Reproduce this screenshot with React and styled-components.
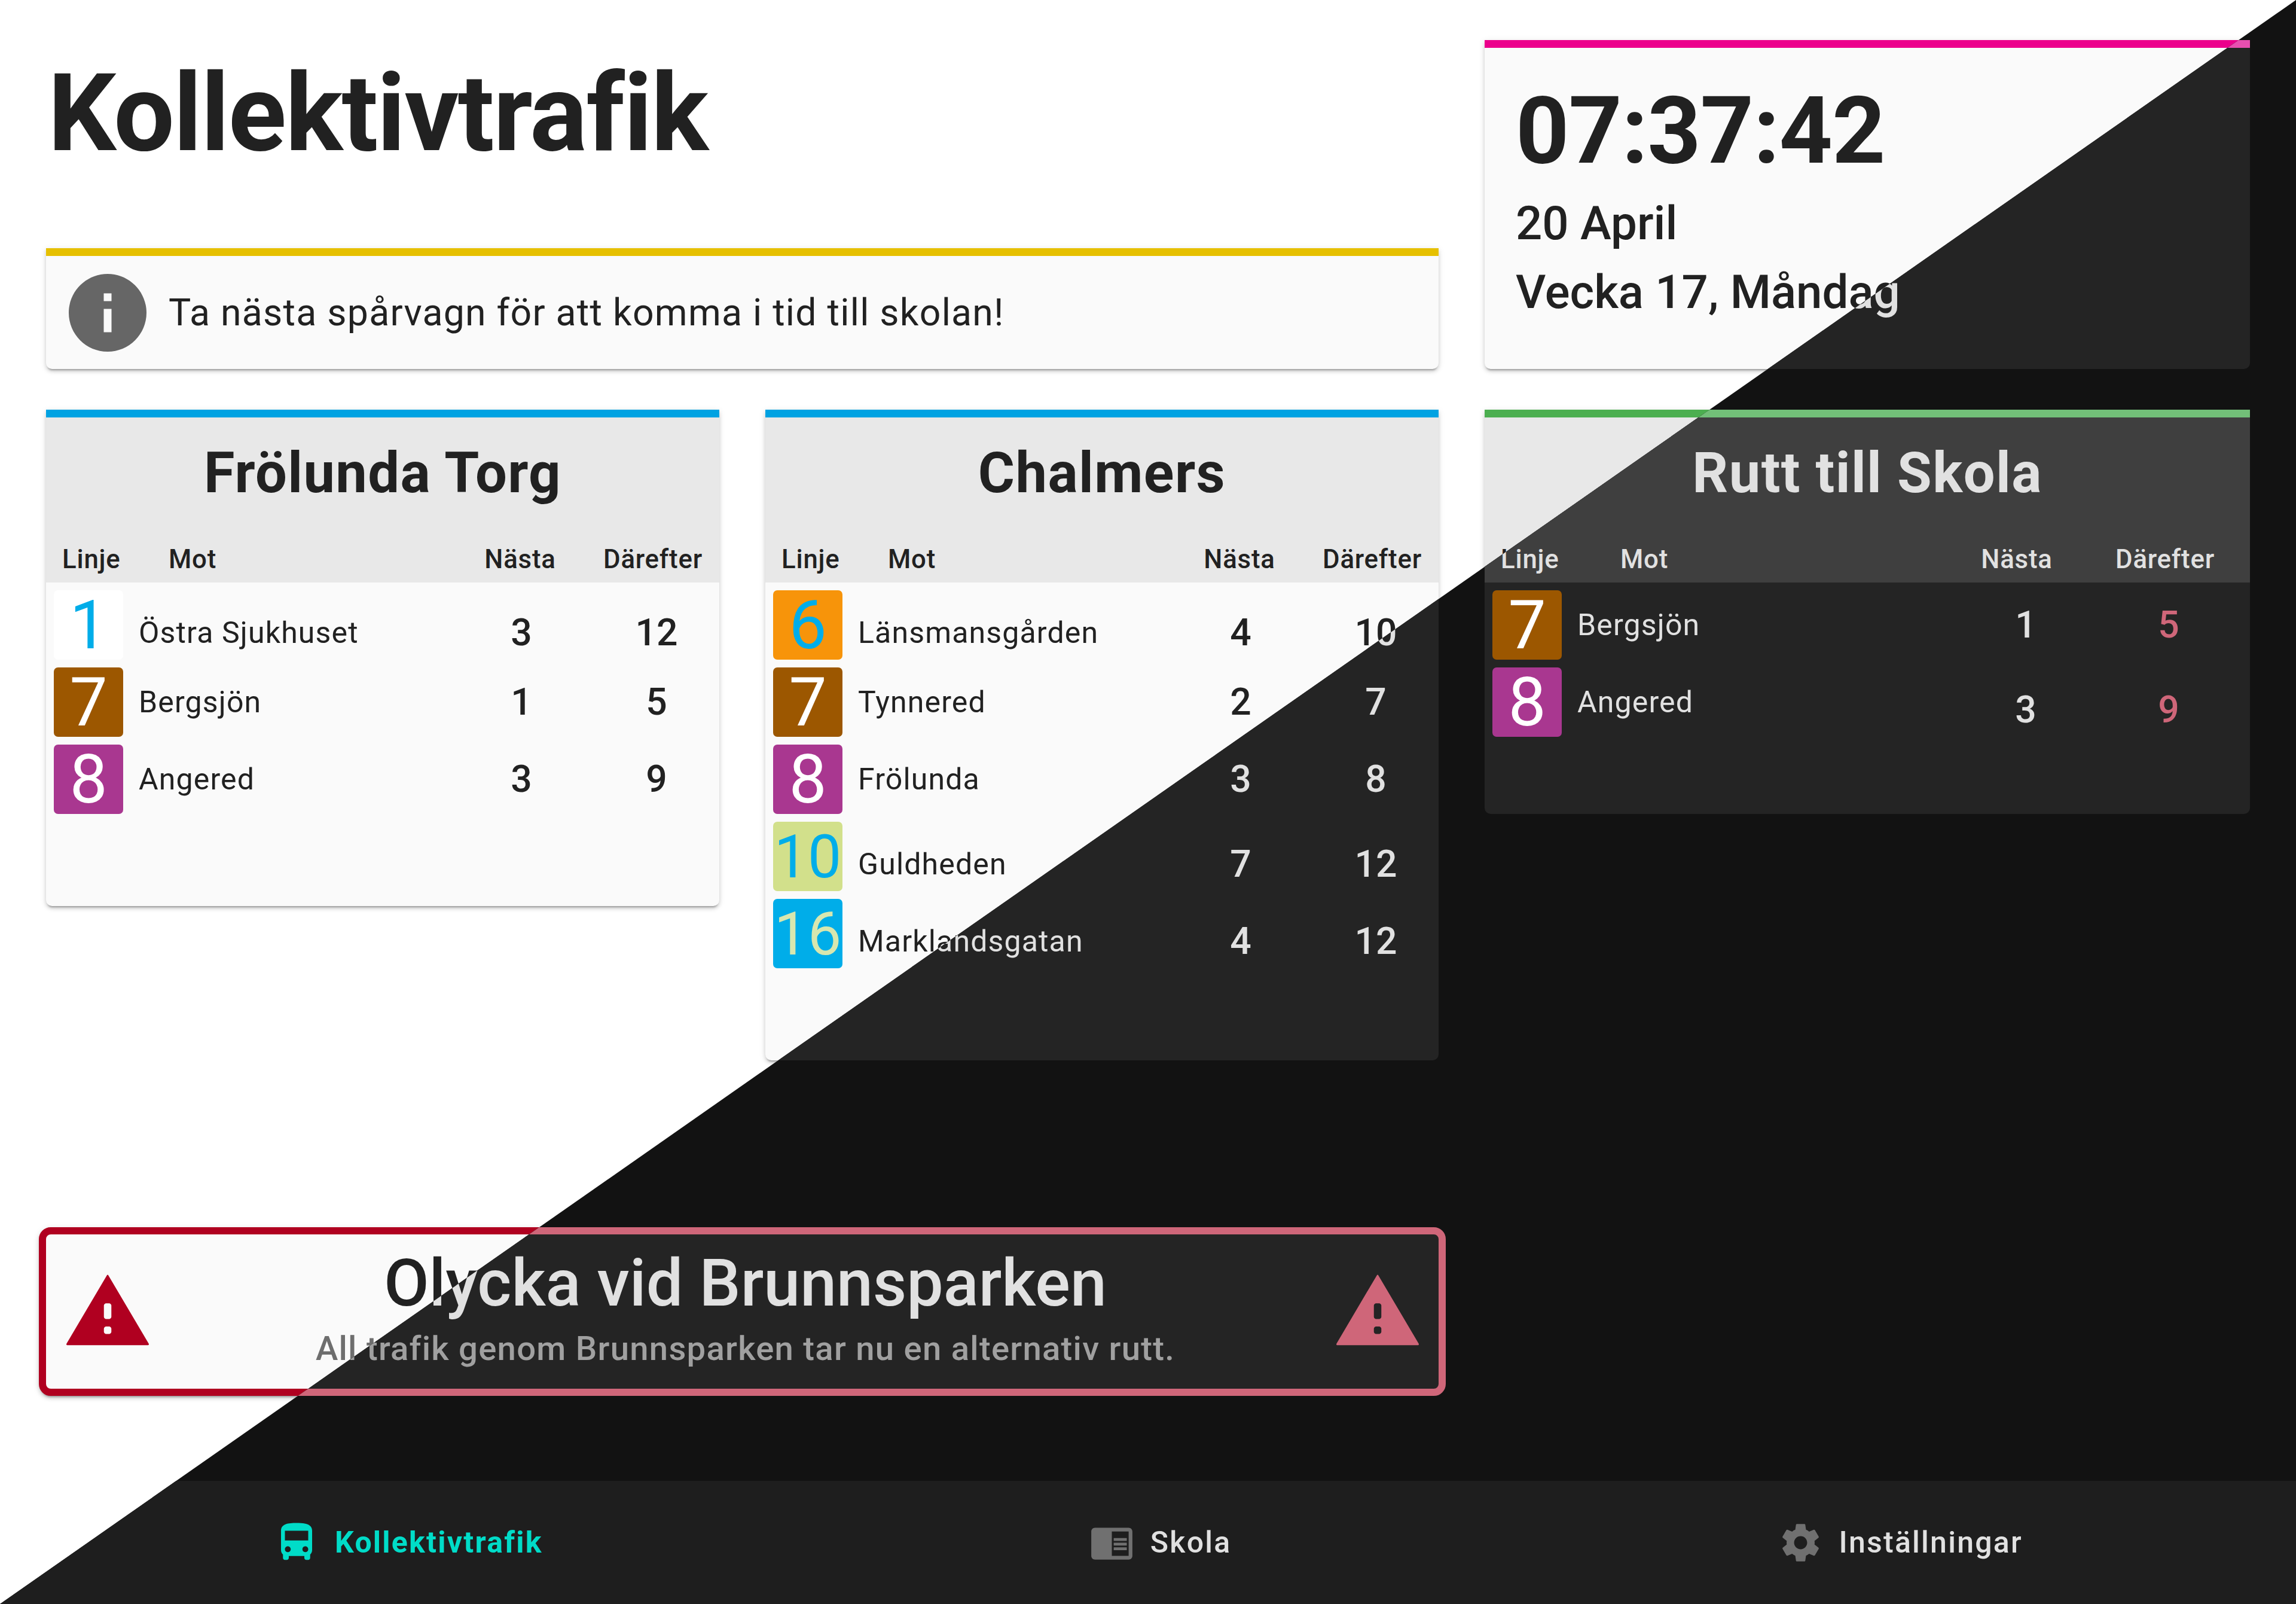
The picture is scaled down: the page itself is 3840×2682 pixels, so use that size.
import React from 'react'
import styled, { ThemeProvider, createGlobalStyle } from 'styled-components'

const light = {
  page: '#ffffff',
  card: '#fafafa',
  head: '#e8e8e8',
  text: '#212121',
  muted: '#6e6e6e',
  icon: '#666666',
  nav: '#ffffff',
  error: '#b00020',
  clockBar: '#ec008c',
  routeBar: '#4caf50',
  shadow: '0 5px 3px -3px rgba(0,0,0,.25), 0 4px 6px rgba(0,0,0,.14), 0 2px 12px rgba(0,0,0,.1)',
}

const dark = {
  page: '#121212',
  card: '#242424',
  head: '#3f3f3f',
  text: '#e1e1e1',
  muted: '#a0a0a0',
  icon: '#707070',
  nav: '#1e1e1e',
  error: '#cf6679',
  clockBar: '#e84fb0',
  routeBar: '#72bf78',
  shadow: 'none',
}

const GlobalStyle = createGlobalStyle`
  html, body {
    margin: 0;
    padding: 0;
    background: #fff;
  }
  body {
    font-family: Roboto, "Liberation Sans", sans-serif;
  }
`

const Stage = styled.div`
  position: relative;
  width: 3840px;
  height: 2682px;
  overflow: hidden;
`

const DarkSide = styled.div`
  position: absolute;
  inset: 0;
  clip-path: polygon(100% 0, 100% 100%, 0 100%);
`

const Page = styled.div`
  display: flex;
  flex-direction: column;
  width: 3840px;
  height: 2682px;
  background: ${(p) => p.theme.page};
  color: ${(p) => p.theme.text};
`

const Main = styled.main`
  flex: 1;
  display: flex;
  flex-direction: column;
  padding: 67px 77px 0;
`

const Board = styled.div`
  display: grid;
  grid-template-columns: 1126px 1126px 1280px;
  column-gap: 77px;
  row-gap: 68px;
  align-items: start;
`

const Intro = styled.div`
  grid-column: span 2;
  display: flex;
  flex-direction: column;
  justify-content: space-between;
  height: 550px;
`

const Title = styled.h1`
  margin: 33px 0 0 3px;
  font-size: 180px;
  line-height: 180px;
  font-weight: 700;
  letter-spacing: -1.8px;
`

const Panel = styled.section`
  background: ${(p) => p.theme.card};
  border-top: 13px solid ${(p) => p.$bar || p.theme.routeBar};
  border-radius: 0 0 10px 10px;
  box-shadow: ${(p) => p.theme.shadow};
  overflow: hidden;
`

const Notice = styled(Panel)`
  display: flex;
  align-items: center;
  gap: 24px;
  height: 189px;
  box-sizing: content-box;
  padding-left: 25px;
  font-size: 62.5px;
  letter-spacing: 1.25px;
`

const NoticeIcon = styled.svg`
  width: 156px;
  height: 156px;
  fill: ${(p) => p.theme.icon};
`

const Clock = styled(Panel)`
  box-sizing: border-box;
  height: 550px;
  padding: 61px 0 0 52px;
`

const Time = styled.div`
  font-size: 156px;
  line-height: 156px;
  font-weight: 700;
  letter-spacing: -0.9px;
  margin-bottom: 19px;
`

const DateLine = styled.div`
  font-size: 78px;
  line-height: 115px;
  font-weight: 500;
`

const StopHead = styled.header`
  background: ${(p) => p.theme.head};
  padding: 18px 0 8px;
`

const StopName = styled.h2`
  margin: 0 0 38px;
  text-align: center;
  font-size: 93.75px;
  line-height: 150px;
  font-weight: 700;
  letter-spacing: 1.4px;
`

const ColumnHead = styled.div`
  display: grid;
  grid-template-columns: ${(p) => p.$columns};
  padding: 0 ${(p) => p.$right}px 0 27px;
  font-size: 43.75px;
  line-height: 62px;
  font-weight: 500;
  letter-spacing: 0.8px;
`

const HeadNumber = styled.span`
  text-align: center;
`

const Rows = styled.div`
  display: flex;
  flex-direction: column;
  gap: 13px;
  padding: 13px 0 ${(p) => p.$tail}px 13px;
`

const Row = styled.div`
  display: grid;
  grid-template-columns: ${(p) => p.$columns};
  align-items: center;
  height: 116px;
`

const LineBox = styled.div`
  width: 116px;
  height: 116px;
  border-radius: 7px;
  background: ${(p) => p.$bg};
  color: ${(p) => p.$fg};
  display: flex;
  align-items: center;
  justify-content: center;
  font-size: ${(p) => (p.$wide ? 100 : 112.5)}px;
  font-weight: 400;
`

const Destination = styled.div`
  padding: ${(p) => (p.$low ? '25px' : '0')} 0 0 26px;
  font-size: 50px;
  line-height: 60px;
  letter-spacing: 1.15px;
`

const Minutes = styled.div`
  padding-top: ${(p) => (p.$low ? '25px' : '0')};
  text-align: center;
  font-size: 62.5px;
  line-height: 70px;
  font-weight: 500;
  color: ${(p) => (p.$late ? p.theme.error : 'inherit')};
`

const Alert = styled.section`
  display: flex;
  width: 2353px;
  height: 282px;
  box-sizing: border-box;
  margin: auto 0 142px -12px;
  padding: 0 27.5px;
  align-items: center;
  background: ${(p) => p.theme.card};
  border: 12.5px solid ${(p) => p.theme.error};
  border-radius: 20px;
  box-shadow: ${(p) => p.theme.shadow};
`

const AlertIcon = styled.svg`
  width: 150px;
  height: 150px;
  flex: none;
  fill: ${(p) => p.theme.error};
`

const AlertBody = styled.div`
  flex: 1;
  align-self: flex-start;
  padding: 20px 0 0 10px;
  text-align: center;
`

const AlertTitle = styled.div`
  font-size: 109.4px;
  line-height: 125px;
  font-weight: 500;
  margin-bottom: 12px;
`

const AlertText = styled.div`
  font-size: 56.25px;
  line-height: 68px;
  font-weight: 500;
  letter-spacing: 1.25px;
  color: ${(p) => p.theme.muted};
`

const Nav = styled.nav`
  display: flex;
  justify-content: space-around;
  align-items: center;
  height: 206px;
  background: ${(p) => p.theme.nav};
`

const NavItem = styled.div`
  display: flex;
  align-items: center;
  gap: ${(p) => (p.$active ? 25 : 27)}px;
  font-size: 50px;
  letter-spacing: 2.25px;
  font-weight: ${(p) => (p.$active ? 700 : 500)};
  color: ${(p) => (p.$active ? '#00dcc8' : 'inherit')};
`

const NavIcon = styled.svg`
  width: ${(p) => (p.$active ? 78 : 75)}px;
  height: ${(p) => (p.$active ? 78 : 75)}px;
  fill: ${(p) => (p.$active ? '#00dcc8' : p.theme.icon)};
`

const BOX = {
  1: ['#ffffff', '#00ade9'],
  6: ['#f7940a', '#00ade9'],
  7: ['#9c5700', '#ffffff'],
  8: ['#a93790', '#ffffff'],
  10: ['#d2e08b', '#00ade9'],
  16: ['#00ade9', '#d8e7af'],
}

const NARROW = {
  head: '178px 1fr 222px 222px',
  right: 0,
  row: '116px 1fr 242px 210px',
  tail: 154,
}

const WIDE = {
  head: '200px 1fr 248px 248px',
  right: 18,
  row: '116px 1fr 206px 272px',
  tail: 129,
}

const stops = [
  {
    name: 'Frölunda Torg',
    bar: '#00a2e2',
    layout: NARROW,
    rows: [
      { line: 1, to: 'Östra Sjukhuset', next: 3, then: 12, low: true, numLow: true },
      { line: 7, to: 'Bergsjön', next: 1, then: 5 },
      { line: 8, to: 'Angered', next: 3, then: 9 },
    ],
  },
  {
    name: 'Chalmers',
    bar: '#00a2e2',
    layout: NARROW,
    rows: [
      { line: 6, to: 'Länsmansgården', next: 4, then: 10, low: true, numLow: true },
      { line: 7, to: 'Tynnered', next: 2, then: 7 },
      { line: 8, to: 'Frölunda', next: 3, then: 8 },
      { line: 10, to: 'Guldheden', next: 7, then: 12, low: true, numLow: true },
      { line: 16, to: 'Marklandsgatan', next: 4, then: 12, low: true, numLow: true },
    ],
  },
  {
    name: 'Rutt till Skola',
    layout: WIDE,
    rows: [
      { line: 7, to: 'Bergsjön', next: 1, then: 5, late: true },
      { line: 8, to: 'Angered', next: 3, then: 9, late: true, numLow: true },
    ],
  },
]

const WarningGlyph = () => (
  <AlertIcon viewBox="0 0 24 24">
    <path
      fillRule="evenodd"
      d="M1.200 21c-.2 0-.3-.2-.2-.4L11.800 2.300c.1-.2.3-.2.4 0L23 20.600c.1.200 0 .4-.2.4H1.200zM11.600 9.800c-.3 0-.6.3-.6.6v3c0 .3.3.6.6.6h.8c.3 0 .6-.3.6-.6v-3c0-.3-.3-.6-.6-.6h-.8zm0 6.200c-.3 0-.6.3-.6.6v.8c0 .3.3.6.6.6h.8c.3 0 .6-.3.6-.6v-.8c0-.3-.3-.6-.6-.6h-.8z"
    />
  </AlertIcon>
)

const Stop = ({ stop }) => {
  const { name, bar, layout, rows } = stop
  return (
    <Panel $bar={bar}>
      <StopHead>
        <StopName>{name}</StopName>
        <ColumnHead $columns={layout.head} $right={layout.right}>
          <span>Linje</span>
          <span>Mot</span>
          <HeadNumber>Nästa</HeadNumber>
          <HeadNumber>Därefter</HeadNumber>
        </ColumnHead>
      </StopHead>
      <Rows $tail={layout.tail}>
        {rows.map((row) => (
          <Row key={row.line} $columns={layout.row}>
            <LineBox $bg={BOX[row.line][0]} $fg={BOX[row.line][1]} $wide={row.line > 9}>{row.line}</LineBox>
            <Destination $low={row.low}>{row.to}</Destination>
            <Minutes $low={row.numLow}>{row.next}</Minutes>
            <Minutes $low={row.numLow} $late={row.late}>{row.then}</Minutes>
          </Row>
        ))}
      </Rows>
    </Panel>
  )
}

const Screen = ({ theme }) => (
  <ThemeProvider theme={theme}>
    <Page>
      <Main>
        <Board>
          <Intro>
            <Title>Kollektivtrafik</Title>
            <Notice $bar="#e6c000">
              <NoticeIcon viewBox="0 0 24 24">
                <path d="M12 2C6.48 2 2 6.48 2 12s4.48 10 10 10 10-4.48 10-10S17.52 2 12 2zm1 15h-2v-6h2v6zm0-8h-2V7h2v2z" />
              </NoticeIcon>
              Ta nästa spårvagn för att komma i tid till skolan!
            </Notice>
          </Intro>
          <Clock $bar={theme.clockBar}>
            <Time>07:37:42</Time>
            <DateLine>20 April</DateLine>
            <DateLine>Vecka 17, Måndag</DateLine>
          </Clock>
          {stops.map((stop) => (
            <Stop key={stop.name} stop={stop} />
          ))}
        </Board>
        <Alert>
          <WarningGlyph />
          <AlertBody>
            <AlertTitle>Olycka vid Brunnsparken</AlertTitle>
            <AlertText>All trafik genom Brunnsparken tar nu en alternativ rutt.</AlertText>
          </AlertBody>
          <WarningGlyph />
        </Alert>
      </Main>
      <Nav>
        <NavItem $active>
          <NavIcon $active viewBox="0 0 24 24">
            <path d="M4 16c0 .88.39 1.670 1 2.220V20c0 .55.45 1 1 1h1c.55 0 1-.45 1-1v-1h8v1c0 .55.45 1 1 1h1c.55 0 1-.45 1-1v-1.780c.61-.55 1-1.340 1-2.220V6c0-3.500-3.580-4-8-4s-8 .5-8 4v10zm3.500 1c-.83 0-1.500-.67-1.500-1.500S6.670 14 7.500 14s1.500.67 1.500 1.500S8.330 17 7.500 17zm9 0c-.83 0-1.500-.67-1.500-1.500s.67-1.500 1.500-1.500 1.500.67 1.500 1.500-.67 1.500-1.500 1.500zm1.500-6H6V6h12v5z" />
          </NavIcon>
          Kollektivtrafik
        </NavItem>
        <NavItem>
          <NavIcon viewBox="0 0 24 24">
            <path d="M13 12h7v1.500h-7zm0-2.500h7V11h-7zm0 5h7V16h-7zM21 4H3c-1.100 0-2 .9-2 2v13c0 1.100.9 2 2 2h18c1.100 0 2-.9 2-2V6c0-1.100-.9-2-2-2zm0 15h-9V6h9v13z" />
          </NavIcon>
          Skola
        </NavItem>
        <NavItem>
          <NavIcon viewBox="0 0 24 24">
            <path d="M19.430 12.980c.04-.32.07-.64.07-.98s-.03-.66-.07-.98l2.110-1.650c.19-.15.24-.42.12-.64l-2-3.460c-.12-.22-.39-.3-.61-.22l-2.490 1c-.52-.4-1.080-.73-1.690-.98l-.38-2.650C14.460 2.180 14.250 2 14 2h-4c-.25 0-.46.18-.49.42l-.38 2.650c-.61.25-1.170.59-1.690.98l-2.490-1c-.23-.09-.49 0-.61.22l-2 3.460c-.13.22-.07.49.12.64l2.110 1.650c-.04.32-.07.65-.07.98s.03.66.07.98l-2.110 1.650c-.19.15-.24.42-.12.64l2 3.460c.12.22.39.3.61.22l2.490-1c.52.4 1.080.73 1.690.98l.38 2.650c.03.24.24.42.49.42h4c.25 0 .46-.18.49-.42l.38-2.650c.61-.25 1.170-.59 1.690-.98l2.490 1c.23.09.49 0 .61-.22l2-3.460c.12-.22.07-.49-.12-.64l-2.110-1.650zM12 15.500c-1.930 0-3.500-1.570-3.500-3.500s1.570-3.500 3.500-3.500 3.500 1.570 3.500 3.500-1.570 3.500-3.500 3.500z" />
          </NavIcon>
          Inställningar
        </NavItem>
      </Nav>
    </Page>
  </ThemeProvider>
)

export default function App() {
  return (
    <>
      <GlobalStyle />
      <Stage>
        <Screen theme={light} />
        <DarkSide>
          <Screen theme={dark} />
        </DarkSide>
      </Stage>
    </>
  )
}
